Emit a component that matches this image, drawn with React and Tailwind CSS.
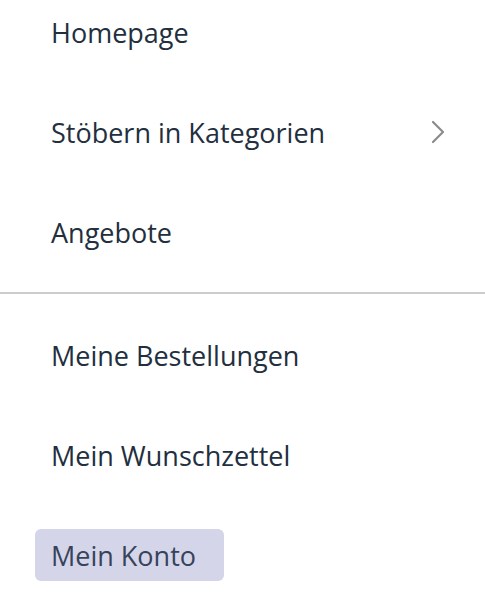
import React from 'react';

function ChevronRight() {
  return (
    <svg width="14" height="24" viewBox="0 0 14 24" fill="none" className="text-[#888c8c]">
      <path d="M2 2l10 10L2 22" stroke="currentColor" strokeWidth="2.2" strokeLinecap="round" strokeLinejoin="round" />
    </svg>
  );
}

function MenuItem({ label, active, hasChevron }) {
  return (
    <div className="flex items-center justify-between pr-[40px]">
      <div
        className={
          'h-[52px] flex items-center pl-[16px] pr-[28px] rounded-[6px] leading-none ' +
          (active ? 'bg-[#d5d5ea] text-[#37435a]' : 'text-[#232f3e]')
        }
      >
        {label}
      </div>
      {hasChevron && <ChevronRight />}
    </div>
  );
}

export default function App() {
  const top = [
    { label: 'Homepage' },
    { label: 'Stöbern in Kategorien', hasChevron: true },
    { label: 'Angebote' },
  ];
  const bottom = [
    { label: 'Meine Bestellungen' },
    { label: 'Mein Wunschzettel' },
    { label: 'Mein Konto', active: true },
  ];

  return (
    <div
      className="w-[485px] h-[598px] bg-white overflow-hidden text-[27px]"
      style={{ fontFamily: '"Open Sans", "Noto Sans", sans-serif' }}
    >
      <div className="flex flex-col gap-[48px] pt-[6px] pl-[35px]">
        {top.map((item) => (
          <MenuItem key={item.label} {...item} />
        ))}
      </div>
      <div className="h-[2px] bg-[#cccccc] mt-[34px] mb-[35px]" />
      <div className="flex flex-col gap-[48px] pl-[35px]">
        {bottom.map((item) => (
          <MenuItem key={item.label} {...item} />
        ))}
      </div>
    </div>
  );
}
